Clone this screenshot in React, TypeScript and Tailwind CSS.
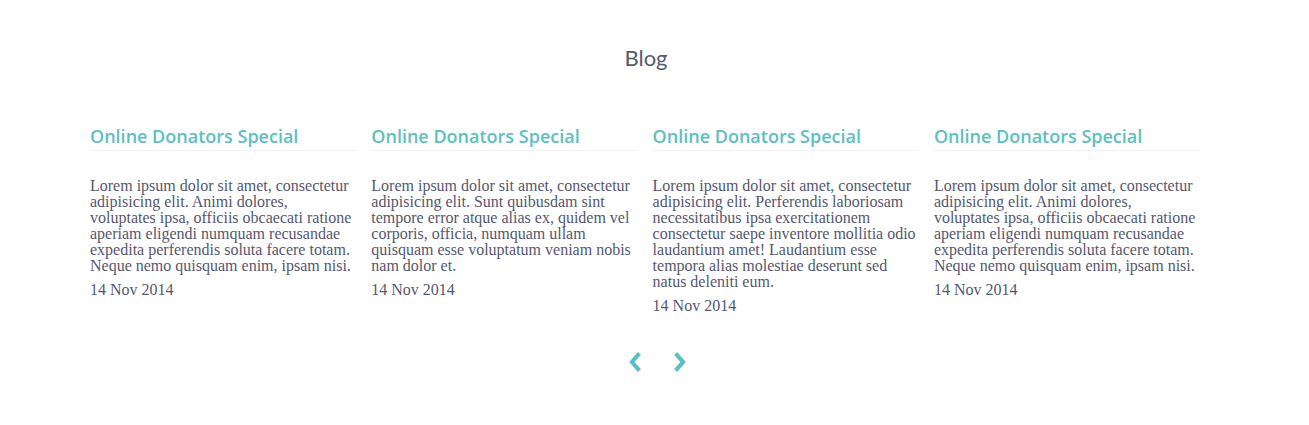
import React from "react";

const posts = [
  {
    title: "Online Donators Special",
    body: "Lorem ipsum dolor sit amet, consectetur adipisicing elit. Animi dolores, voluptates ipsa, officiis obcaecati ratione aperiam eligendi numquam recusandae expedita perferendis soluta facere totam. Neque nemo quisquam enim, ipsam nisi.",
    date: "14 Nov 2014",
  },
  {
    title: "Online Donators Special",
    body: "Lorem ipsum dolor sit amet, consectetur adipisicing elit. Sunt quibusdam sint tempore error atque alias ex, quidem vel corporis, officia, numquam ullam quisquam esse voluptatum veniam nobis nam dolor et.",
    date: "14 Nov 2014",
  },
  {
    title: "Online Donators Special",
    body: "Lorem ipsum dolor sit amet, consectetur adipisicing elit. Perferendis laboriosam necessitatibus ipsa exercitationem consectetur saepe inventore mollitia odio laudantium amet! Laudantium esse tempora alias molestiae deserunt sed natus deleniti eum.",
    date: "14 Nov 2014",
  },
  {
    title: "Online Donators Special",
    body: "Lorem ipsum dolor sit amet, consectetur adipisicing elit. Animi dolores, voluptates ipsa, officiis obcaecati ratione aperiam eligendi numquam recusandae expedita perferendis soluta facere totam. Neque nemo quisquam enim, ipsam nisi.",
    date: "14 Nov 2014",
  },
];

const Chevron = ({ dir }: { dir: "left" | "right" }) => (
  <svg width="16" height="22" viewBox="0 0 16 22" fill="none">
    <path
      d={dir === "left" ? "M11 4 L5 11 L11 18" : "M5 4 L11 11 L5 18"}
      stroke="#5bc0c3"
      strokeWidth="4.2"
      strokeLinecap="square"
      strokeLinejoin="miter"
    />
  </svg>
);

export default function App() {
  return (
    <div className="w-[1309px] h-[425px] bg-white">
      <div className="w-[1292px] flex flex-col items-center">
        <h2 className="mt-[43px] text-[22px] leading-[30px] text-[#595a70] font-['Lato',sans-serif]">
          Blog
        </h2>
      </div>
      <div className="mt-[51px] ml-[90px] flex">
        {posts.map((p, i) => (
          <div key={i} className="w-[281.3px] shrink-0 pr-[15px]">
            <h3 className="text-[18px] leading-[24px] font-semibold text-[#5bc0c3] font-['Open_Sans',sans-serif] pb-[2px] border-b border-[#f0f0f0]">
              {p.title}
            </h3>
            <p className="mt-[27px] text-[16px] leading-[16px] text-[#555770] font-['Liberation_Serif',serif]">
              {p.body}
            </p>
            <div className="mt-[7px] text-[16px] leading-[18px] text-[#555770] font-['Liberation_Serif',serif]">
              {p.date}
            </div>
          </div>
        ))}
      </div>
      <div className="mt-[36px] ml-[627px] flex gap-[29px] items-center">
        <Chevron dir="left" />
        <Chevron dir="right" />
      </div>
    </div>
  );
}
